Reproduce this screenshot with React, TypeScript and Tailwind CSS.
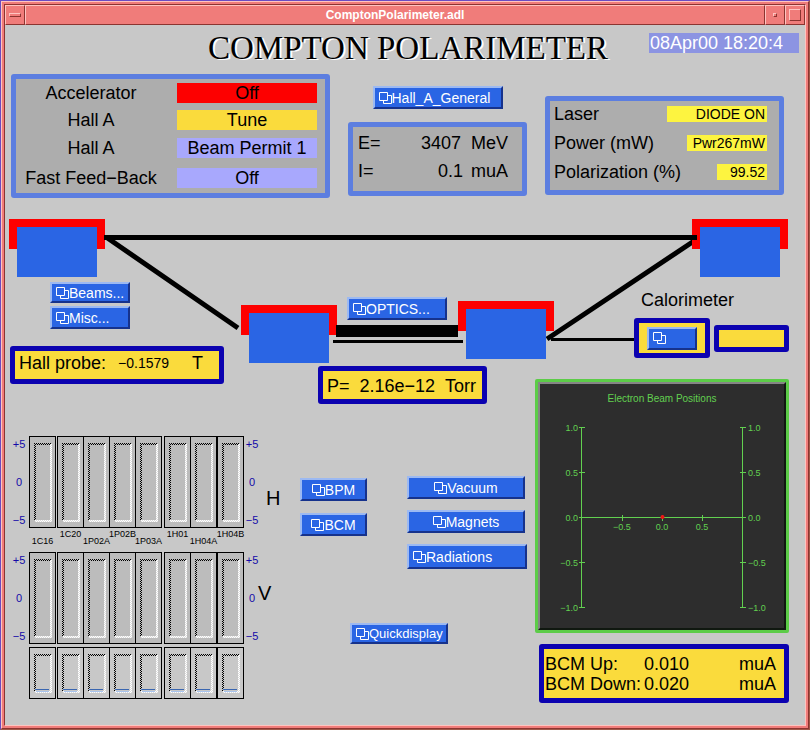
import type { ReactNode } from "react";

const SHELL_ICON = (
  <svg width="13" height="14" viewBox="0 0 13 14" className="shrink-0" aria-hidden="true">
    <path d="M0.5 1.5h8v8h-8zM8.5 4.5h4v8h-8v-3" fill="none" stroke="#fff" strokeWidth="1" />
  </svg>
);

function RelatedButton({ label, className = "" }: { label?: string; className?: string }) {
  return (
    <button
      type="button"
      aria-label={label ? undefined : "Open calorimeter display"}
      className={`flex items-center border-2 border-t-[#9cb9f2] border-r-[#16328c] border-b-[#16328c] border-l-[#9cb9f2] bg-[#2a65e4] px-1 leading-4 whitespace-nowrap text-white ${className}`}
    >
      {SHELL_ICON}
      {label}
    </button>
  );
}

function StatusRow({ label, value, tone }: { label: string; value: string; tone: string }) {
  return (
    <div className="flex h-5 items-center">
      <dt className="w-[150px] text-center">{label}</dt>
      <dd className={`ml-[11px] w-[140px] text-center leading-5 ${tone}`}>{value}</dd>
    </div>
  );
}

function LaserRow({ label, value, size }: { label: string; value: string; size: string }) {
  return (
    <div className="flex items-center justify-between">
      <dt>{label}</dt>
      <dd className={`h-4 bg-[#fdf440] pr-0.5 text-right text-sm leading-4 ${size}`}>{value}</dd>
    </div>
  );
}

function YellowBox({ children, className = "" }: { children?: ReactNode; className?: string }) {
  return (
    <div className={`rounded-[3px] border-[5px] border-[#0c02b0] bg-[#fadb3c] ${className}`}>
      {children}
    </div>
  );
}

const BPM_GROUPS = [
  { names: ["1C16"], spacing: "", firstLow: true },
  { names: ["1C20", "1P02A", "1P02B", "1P03A"], spacing: "ml-px", firstLow: false },
  { names: ["1H01", "1H04A"], spacing: "ml-0.5", firstLow: false },
  { names: ["1H04B"], spacing: "", firstLow: false },
];

function Gauge({ height, bar }: { height: number; bar?: boolean }) {
  return (
    <svg width="27" height={height} className="block" aria-hidden="true">
      <rect
        x="0.5"
        y="0.5"
        width="26"
        height={height - 1}
        fill={bar ? "#c8c8c8" : "#bcbcbc"}
        stroke="#000"
      />
      <rect x="5" y="7" width="18" height="2" fill="url(#darkDither)" />
      <rect x="5" y="7" width="2" height={height - 14} fill="url(#darkDither)" />
      <rect x="21" y="8" width="2" height={height - 14} fill="url(#lightDither)" />
      <rect x="6" y={height - 8} width="17" height="2" fill="url(#lightDither)" />
      {bar && <rect x="6" y={height - 10} width="14" height="1" fill="#3a66b0" />}
      {bar && <rect x="7" y={height - 8} width="13" height="1" fill="#a8c4ee" />}
    </svg>
  );
}

function GaugeRow({ height, bar, labels }: { height: number; bar?: boolean; labels?: boolean }) {
  return (
    <div className="flex">
      {BPM_GROUPS.map((group) => (
        <div key={group.names[0]} className={`flex ${group.spacing}`}>
          {group.names.map((name, i) => (
            <div key={name} className={i > 0 ? "-ml-px w-[27px]" : "w-[27px]"}>
              <Gauge height={height} bar={bar} />
              {labels && (
                <div
                  className={`flex h-6 justify-center text-[9px] leading-[10px] whitespace-nowrap ${
                    group.firstLow || i % 2 === 1 ? "pt-2" : "pt-px"
                  }`}
                >
                  {name}
                </div>
              )}
            </div>
          ))}
        </div>
      ))}
    </div>
  );
}

function Scale({ width }: { width: string }) {
  return (
    <div
      className={`flex h-[92px] flex-col items-center justify-between py-px text-[11px] leading-[14px] text-[#1408a8] ${width}`}
    >
      <span>+5</span>
      <span>0</span>
      <span>−5</span>
    </div>
  );
}

function Dithers() {
  return (
    <svg width="0" height="0" className="absolute" aria-hidden="true">
      <defs>
        <pattern id="darkDither" width="2" height="2" patternUnits="userSpaceOnUse">
          <path d="M0 0h1v1h-1zM1 1h1v1h-1z" fill="#000" />
        </pattern>
        <pattern id="lightDither" width="2" height="2" patternUnits="userSpaceOnUse">
          <rect width="2" height="2" fill="#dcdcdc" />
          <path d="M0 0h1v1h-1zM1 1h1v1h-1z" fill="#fff" />
        </pattern>
      </defs>
    </svg>
  );
}

function Magnet({ x, y }: { x: number; y: number }) {
  return (
    <g>
      <rect x={x} y={y} width="96" height="30" fill="#fd0000" />
      <rect x={x + 8} y={y + 8} width="80" height="50" fill="#2a65e4" />
    </g>
  );
}

function BeamLine() {
  return (
    <svg
      viewBox="5 198 800 170"
      preserveAspectRatio="none"
      className="absolute top-0 left-0 h-[170px] w-full"
      role="img"
      aria-label="Beam line"
    >
      <path d="M106 237L238 328M547 339L697 239" stroke="#000" strokeWidth="5" />
      <Magnet x={9} y={219} />
      <Magnet x={241} y={305} />
      <Magnet x={458} y={301} />
      <Magnet x={692} y={219} />
      <rect x="104" y="235" width="593" height="5" />
      <rect x="336" y="325" width="122" height="12" />
      <rect x="333" y="340" width="130" height="3" />
      <rect x="551" y="338" width="84" height="3" />
    </svg>
  );
}

const Y_TICKS = [
  { y: 48, text: "1.0" },
  { y: 93, text: "0.5" },
  { y: 138, text: "0.0" },
  { y: 183, text: "−0.5" },
  { y: 228, text: "−1.0" },
];
const X_TICKS = [
  { x: 87, text: "−0.5" },
  { x: 127, text: "0.0" },
  { x: 167, text: "0.5" },
];

function BeamPlot() {
  return (
    <div className="rounded-xs border-[3px] border-[#5ccc48]">
      <div className="border-2 border-t-[#858585] border-r-[#101810] border-b-[#101810] border-l-[#858585] bg-[#2d2d2d]">
        <svg viewBox="5 5 244 244" className="block w-full" role="img" aria-label="Electron beam positions plot">
          <g fill="#62d050">
            <text x="127" y="23" textAnchor="middle" fontSize="10">
              Electron Beam Positions
            </text>
            {Y_TICKS.map((t) => (
              <g key={t.y} fontSize="9">
                <rect x="44" y={t.y} width="6" height="1" />
                <rect x="205" y={t.y} width="6" height="1" />
                <text x="43" y={t.y + 4} textAnchor="end">{t.text}</text>
                <text x="213" y={t.y + 4}>{t.text}</text>
              </g>
            ))}
            {X_TICKS.map((t) => (
              <g key={t.x} fontSize="9">
                <rect x={t.x} y="136" width="1" height="6" />
                <text x={t.x} y="151" textAnchor="middle">{t.text}</text>
              </g>
            ))}
            <rect x="46" y="48" width="1" height="180" />
            <rect x="207" y="48" width="1" height="180" />
            <rect x="46" y="138" width="162" height="1" />
          </g>
          <circle cx="127.5" cy="138" r="2" fill="#f01414" />
        </svg>
      </div>
    </div>
  );
}

function TitleBar() {
  const raised = "border border-t-[#ffc4c0] border-r-[#8c3430] border-b-[#8c3430] border-l-[#ffc4c0]";
  return (
    <header className="flex h-5 bg-[#f07c7a]">
      <button type="button" aria-label="Window menu" className={`flex w-5 items-center justify-center ${raised}`}>
        <span className={`h-1 w-3 ${raised}`} />
      </button>
      <h2 className={`flex-1 text-center text-xs leading-[18px] font-bold text-white ${raised}`}>
        ComptonPolarimeter.adl
      </h2>
      <button type="button" aria-label="Minimize" className={`flex w-5 items-center justify-center ${raised}`}>
        <span className={`h-1 w-1 ${raised}`} />
      </button>
      <button type="button" aria-label="Maximize" className={`flex w-5 items-center justify-center ${raised}`}>
        <span className={`h-3 w-3 ${raised}`} />
      </button>
    </header>
  );
}

const PANEL = "rounded-[3px] border-[5px] border-[#5c7ee0] bg-[#adadad]";

export default function App() {
  return (
    <div className="flex min-h-screen flex-col border border-t-[#6a4cc0] border-r-[#a05848] border-b-[#a05848] border-l-[#6a4cc0] bg-[#f07c7a] font-['Liberation_Sans',Arial,sans-serif] text-lg leading-5 text-black">
      <div className="flex flex-1 flex-col border border-t-[#ffc4c0] border-r-[#8c3430] border-b-[#8c3430] border-l-[#ffc4c0] p-0.5">
        <div className="flex flex-1 flex-col border border-t-[#8c3430] border-r-[#ffc4c0] border-b-[#ffc4c0] border-l-[#8c3430] bg-[#c8c8c8]">
          <TitleBar />
          <Dithers />
          <main>
            <div className="grid h-[49px] grid-cols-[1fr_auto_1fr] items-start pt-[3px] pl-1.5">
              <span />
              <h1 className="font-['Liberation_Serif','Times_New_Roman',serif] text-[33px] leading-10 whitespace-nowrap [text-shadow:2px_1px_0_#fff]">
                COMPTON POLARIMETER
              </h1>
              <time className="mt-[5px] mr-1.5 w-[150px] justify-self-end bg-[#8c94e2] pl-px text-white">
                08Apr00 18:20:4
              </time>
            </div>

            <div className="flex items-start justify-between pr-[21px] pl-1.5">
              <dl className={`h-[124px] w-[319px] pt-1 ${PANEL}`}>
                <StatusRow label="Accelerator" value="Off" tone="bg-[#fd0000]" />
                <div className="h-[7px]" />
                <StatusRow label="Hall A" value="Tune" tone="bg-[#fadb3c]" />
                <div className="h-2" />
                <StatusRow label="Hall A" value="Beam Permit 1" tone="bg-[#a8a8fd]" />
                <div className="h-2.5" />
                <StatusRow label="Fast Feed−Back" value="Off" tone="bg-[#a8a8fd]" />
              </dl>

              <div className="flex w-[179px] flex-col items-center pt-3">
                <RelatedButton label="Hall_A_General" className="h-[23px] w-[130px] text-sm" />
                <dl className={`mt-[13px] flex h-[74px] w-full flex-col gap-2 px-[5px] pt-1.5 ${PANEL}`}>
                  <div className="flex">
                    <dt>E=</dt>
                    <dd className="flex flex-1 justify-end gap-2.5 pr-1.5">
                      <span>3407</span>
                      <span className="w-10">MeV</span>
                    </dd>
                  </div>
                  <div className="flex">
                    <dt>I=</dt>
                    <dd className="flex flex-1 justify-end gap-2 pr-1.5">
                      <span>0.1</span>
                      <span className="w-10">muA</span>
                    </dd>
                  </div>
                </dl>
              </div>

              <dl className={`mt-[22px] flex h-[99px] w-[239px] flex-col gap-[9px] pt-[3px] pr-3 pl-1 ${PANEL}`}>
                <LaserRow label="Laser" value="DIODE ON" size="w-[100px]" />
                <LaserRow label="Power (mW)" value="Pwr267mW" size="w-20" />
                <LaserRow label="Polarization (%)" value="99.52" size="w-[50px]" />
              </dl>
            </div>

            <div className="relative flex pr-4">
              <BeamLine />
              <div className="relative flex-1">
                <div className="flex h-[206px]">
                  <div className="w-[214px] shrink-0 pt-[84px] pl-[5px]">
                    <div className="flex flex-col gap-[3px] pl-10">
                      <RelatedButton label="Beams..." className="h-[21px] w-20 text-sm" />
                      <RelatedButton label="Misc..." className="h-[23px] w-20 text-sm" />
                    </div>
                    <YellowBox className="mt-[17px] flex h-[38px] w-[214px] items-center pr-4 pb-1 pl-1">
                      <span>Hall probe:</span>
                      <span className="ml-3 flex-1 text-sm leading-5">−0.1579</span>
                      <span>T</span>
                    </YellowBox>
                  </div>
                  <div className="ml-[99px] pt-[99px]">
                    <RelatedButton label="OPTICS..." className="ml-[29px] h-[23px] w-[100px] text-sm" />
                    <YellowBox className="mt-[46px] flex h-[38px] w-[169px] items-center justify-between pt-0.5 pr-1.5 pl-1">
                      <span>P=</span>
                      <span>2.16e−12</span>
                      <span>Torr</span>
                    </YellowBox>
                  </div>
                </div>

                <div className="flex pl-1.5">
                  <section aria-label="Beam position monitors" className="flex w-[289px] items-start pt-8">
                    <div className="flex flex-col gap-6">
                      <Scale width="w-4" />
                      <Scale width="w-4" />
                    </div>
                    <div className="mx-0.5">
                      <GaugeRow height={92} labels />
                      <GaugeRow height={92} />
                      <div className="h-[3px]" />
                      <GaugeRow height={52} bar />
                    </div>
                    <div className="flex flex-col gap-6">
                      <Scale width="w-3" />
                      <Scale width="w-3" />
                    </div>
                    <div className="flex flex-col pt-12 text-xl leading-7">
                      <span className="pl-2">H</span>
                      <span className="mt-[67px]">V</span>
                    </div>
                  </section>

                  <div className="pt-[72px]">
                    <div className="flex gap-10">
                      <div className="flex flex-col gap-3 pt-0.5">
                        <RelatedButton label="BPM" className="h-[23px] w-[67px] justify-center text-sm" />
                        <RelatedButton label="BCM" className="h-[23px] w-[67px] justify-center text-sm" />
                      </div>
                      <div className="flex flex-col gap-[11px]">
                        <RelatedButton label="Vacuum" className="h-[23px] w-[118px] justify-center text-sm" />
                        <RelatedButton label="Magnets" className="h-[23px] w-[118px] justify-center text-sm" />
                        <RelatedButton label="Radiations" className="h-[25px] w-[120px] text-sm" />
                      </div>
                    </div>
                    <RelatedButton label="Quickdisplay" className="mt-[54px] ml-[50px] h-[21px] w-[98px] text-[13px]" />
                  </div>
                </div>
              </div>

              <div className="relative w-[254px] shrink-0 pt-[92px]">
                <div className="pl-[106px]">Calorimeter</div>
                <div className="mt-2 flex items-center justify-end gap-1">
                  <YellowBox className="flex h-10 w-[76px] items-center justify-center">
                    <RelatedButton className="h-[23px] w-[50px]" />
                  </YellowBox>
                  <YellowBox className="h-[27px] w-[75px]" />
                </div>
                <div className="mt-[21px]">
                  <BeamPlot />
                </div>
                <YellowBox className="mt-[11px] ml-1 h-[59px] pt-[5px] pr-2 pl-px">
                  <dl>
                    <div className="flex">
                      <dt className="w-[99px]">BCM Up:</dt>
                      <dd className="flex flex-1 justify-between">
                        <span>0.010</span>
                        <span>muA</span>
                      </dd>
                    </div>
                    <div className="flex">
                      <dt className="w-[99px]">BCM Down:</dt>
                      <dd className="flex flex-1 justify-between">
                        <span>0.020</span>
                        <span>muA</span>
                      </dd>
                    </div>
                  </dl>
                </YellowBox>
              </div>
            </div>
          </main>
        </div>
      </div>
    </div>
  );
}
